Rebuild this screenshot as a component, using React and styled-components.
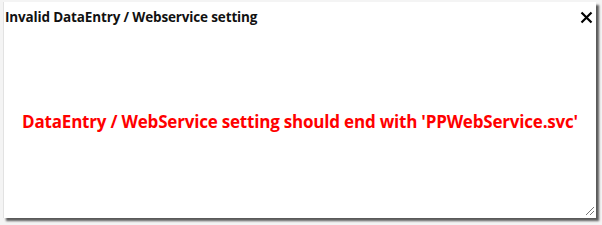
import React from 'react';
import styled, { createGlobalStyle } from 'styled-components';

const GlobalStyle = createGlobalStyle`
  html, body {
    margin: 0;
    padding: 0;
    background: #f4f4f4;
    width: 602px;
    height: 225px;
    overflow: hidden;
  }
  #root {
    font-family: "Open Sans", "Noto Sans", sans-serif;
  }
`;

const Page = styled.div`
  width: 602px;
  height: 225px;
  padding: 2px 0 0 3px;
  box-sizing: border-box;
`;

const Dialog = styled.div`
  position: relative;
  width: 593px;
  height: 216px;
  background: #fff;
  border-left: 1px solid #e2e2e2;
  box-sizing: border-box;
  box-shadow: 3px 3px 2px #5a5a5a;
  display: flex;
  flex-direction: column;
`;

const TitleBar = styled.div`
  display: flex;
  align-items: center;
  justify-content: space-between;
  padding: 4px 3px 0 1px;
  height: 22px;
`;

const Title = styled.h1`
  margin: 0;
  font-size: 13.5px;
  font-weight: 700;
  color: #111;
  letter-spacing: -0.15px;
`;

const Close = styled.button`
  border: none;
  background: none;
  padding: 0;
  width: 14px;
  height: 14px;
  display: flex;
  align-items: center;
  justify-content: center;
  cursor: pointer;
`;

const Body = styled.div`
  flex: 1;
  display: flex;
  align-items: center;
  justify-content: center;
  padding-bottom: 4px;
`;

const Message = styled.p`
  margin: 0;
  color: #ff0000;
  font-size: 17px;
  font-weight: 700;
  letter-spacing: -0.2px;
`;

const Grip = styled.svg`
  position: absolute;
  right: 1px;
  bottom: 2px;
`;

export default function App() {
  return (
    <Page>
      <GlobalStyle />
      <Dialog>
        <TitleBar>
          <Title>Invalid DataEntry / Webservice setting</Title>
          <Close aria-label="close">
            <svg width="13" height="13" viewBox="0 0 13 13">
              <path d="M1.5 1.5 L11.5 11.5 M11.5 1.5 L1.5 11.5" stroke="#000" strokeWidth="2.2" />
            </svg>
          </Close>
        </TitleBar>
        <Body>
          <Message>DataEntry / WebService setting should end with 'PPWebService.svc'</Message>
        </Body>
        <Grip width="10" height="10" viewBox="0 0 10 10">
          <path d="M1 9 L9 1 M5 9 L9 5" stroke="#777" strokeWidth="1" />
        </Grip>
      </Dialog>
    </Page>
  );
}
